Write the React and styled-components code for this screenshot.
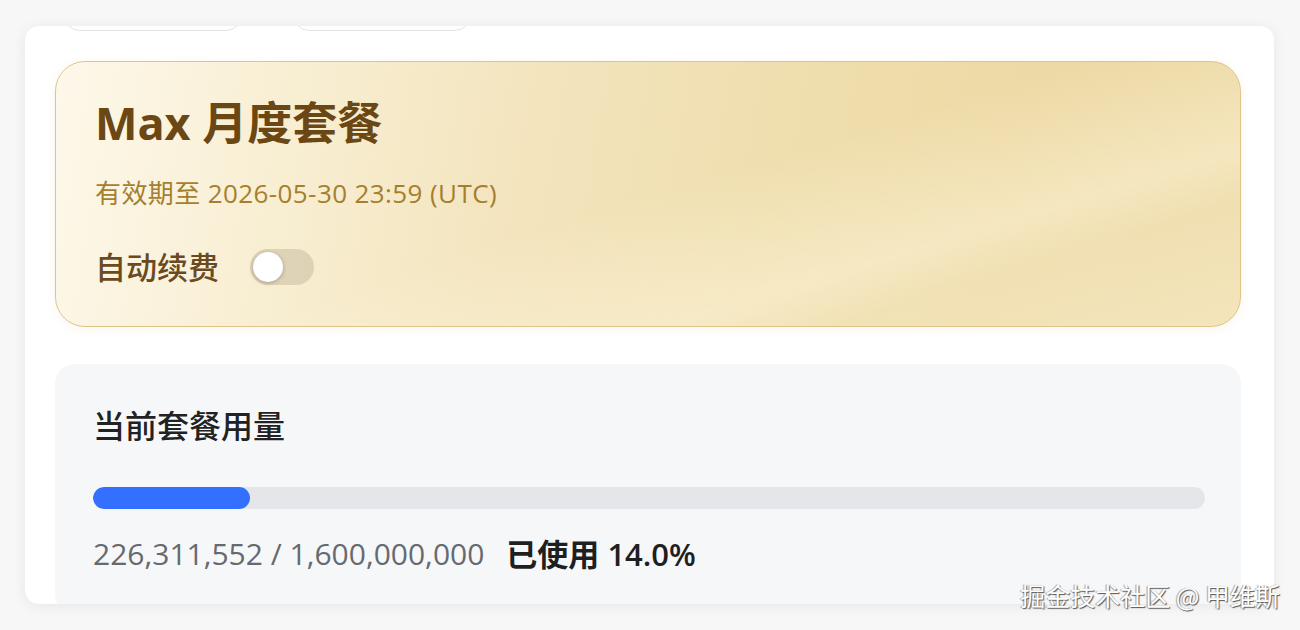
import React, { useState } from 'react'
import styled, { createGlobalStyle } from 'styled-components'

const GlobalStyle = createGlobalStyle`
  html, body {
    margin: 0;
    padding: 0;
    background: #f7f7f8;
    font-family: "Open Sans", "Noto Sans CJK SC", sans-serif;
  }
`

const Page = styled.div`
  position: relative;
  height: 630px;
  padding: 26px 26px 0 25px;
  box-sizing: border-box;
`

const Panel = styled.div`
  height: 578px;
  background: #fff;
  border-radius: 14px;
  box-shadow: 0 2px 14px rgba(0, 0, 0, 0.07);
  overflow: hidden;
  padding: 0 33px 0 30px;
  box-sizing: border-box;
`

const TabRow = styled.div`
  display: flex;
  gap: 51px;
  margin: -35px 0 0 9px;
`

const Tab = styled.div`
  width: 178px;
  height: 40px;
  border: 1px solid #e2e2e2;
  border-radius: 16px;
  box-sizing: border-box;
`

const PlanCard = styled.div`
  margin-top: 30px;
  height: 266px;
  box-sizing: border-box;
  border: 1px solid #ddc588;
  border-radius: 30px;
  padding: 33px 39px 0;
  background:
    linear-gradient(
      163deg,
      rgba(255, 250, 232, 0) 50%,
      rgba(255, 248, 225, 0.45) 72%,
      rgba(255, 250, 232, 0.2) 80%,
      rgba(255, 248, 225, 0.4) 100%
    ),
    linear-gradient(
      100deg,
      #fdf8ea 0%,
      #f8eed2 20%,
      #f3e4bd 40%,
      #efdeae 60%,
      #edd9a5 80%,
      #ecd8a3 100%
    );
  box-shadow: 0 2px 10px rgba(200, 170, 100, 0.12);
  display: flex;
  flex-direction: column;
`

const PlanTitle = styled.div`
  font-size: 45px;
  line-height: 56px;
  font-weight: 700;
  color: #6b4713;
`

const Expire = styled.div`
  margin-top: 24px;
  font-size: 26px;
  line-height: 36px;
  letter-spacing: 0.4px;
  color: #a57f2e;
`

const RenewRow = styled.div`
  margin-top: 38px;
  display: flex;
  align-items: center;
  gap: 31px;
`

const RenewLabel = styled.span`
  font-size: 31px;
  line-height: 36px;
  font-weight: 500;
  color: #6a4a1e;
`

const Switch = styled.button`
  width: 64px;
  height: 36px;
  border: none;
  padding: 3px;
  border-radius: 18px;
  background: ${({ on }) => (on ? '#c99a3c' : 'rgba(190, 180, 150, 0.45)')};
  display: flex;
  justify-content: ${({ on }) => (on ? 'flex-end' : 'flex-start')};
  cursor: pointer;
`

const Knob = styled.span`
  width: 30px;
  height: 30px;
  border-radius: 50%;
  background: #fff;
  box-shadow: 0 1px 4px rgba(0, 0, 0, 0.25);
`

const UsageCard = styled.div`
  margin-top: 37px;
  background: #f6f7f9;
  border-radius: 20px;
  padding: 42px 36px 40px 38px;
`

const UsageTitle = styled.div`
  font-size: 32px;
  line-height: 40px;
  font-weight: 500;
  color: #222;
`

const Track = styled.div`
  margin-top: 41px;
  height: 22px;
  border-radius: 11px;
  background: #e4e6e9;
  overflow: hidden;
`

const Fill = styled.div`
  height: 100%;
  border-radius: 11px;
  background: #3370ff;
`

const UsageText = styled.div`
  margin-top: 25px;
  display: flex;
  align-items: center;
  gap: 22px;
  line-height: 40px;
  font-size: 30px;
`

const Amount = styled.span`
  color: #666a70;
`

const Percent = styled.span`
  color: #1f1f1f;
  font-weight: 600;
  font-size: 31px;
`

const Watermark = styled.div`
  position: absolute;
  right: 20px;
  bottom: 17px;
  font-family: "Noto Sans CJK SC", sans-serif;
  font-size: 25px;
  color: #fff;
  text-shadow: 1px 1px 1px #555, -1px 0 1px rgba(0, 0, 0, 0.35);
`

const used = 226311552
const total = 1600000000

export default function App() {
  const [auto, setAuto] = useState(false)
  const pct = (used / total) * 100

  return (
    <Page>
      <GlobalStyle />
      <Panel>
        <TabRow>
          <Tab />
          <Tab />
        </TabRow>
        <PlanCard>
          <PlanTitle>Max 月度套餐</PlanTitle>
          <Expire>有效期至 2026-05-30 23:59 (UTC)</Expire>
          <RenewRow>
            <RenewLabel>自动续费</RenewLabel>
            <Switch on={auto ? 1 : 0} onClick={() => setAuto(!auto)}>
              <Knob />
            </Switch>
          </RenewRow>
        </PlanCard>
        <UsageCard>
          <UsageTitle>当前套餐用量</UsageTitle>
          <Track>
            <Fill style={{ width: `${pct}%` }} />
          </Track>
          <UsageText>
            <Amount>
              {used.toLocaleString('en-US')} / {total.toLocaleString('en-US')}
            </Amount>
            <Percent>已使用 14.0%</Percent>
          </UsageText>
        </UsageCard>
      </Panel>
      <Watermark>掘金技术社区 @ 甲维斯</Watermark>
    </Page>
  )
}
